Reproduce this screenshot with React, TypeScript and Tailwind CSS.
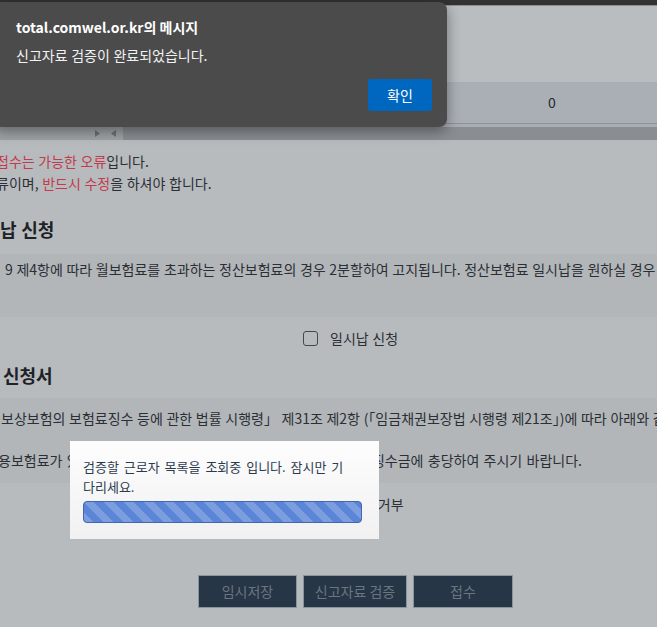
import React from "react";

function Arrow({ dir }: { dir: "left" | "right" }) {
  return (
    <svg width="5" height="7" viewBox="0 0 5 7" className="block">
      {dir === "right" ? (
        <polygon points="0,0 5,3.5 0,7" fill="#6c7075" />
      ) : (
        <polygon points="5,0 0,3.5 5,7" fill="#6c7075" />
      )}
    </svg>
  );
}

export default function App() {
  return (
    <div className="relative w-[657px] h-[627px] overflow-hidden bg-[#b7bbbe] font-['Noto_Sans_CJK_KR','Noto_Sans',sans-serif] text-[14px] [word-spacing:0.5px] text-[#2b2f35]">
      {/* top strip */}
      <div className="h-[5px] bg-[#323232]" />
      <div className="h-[1px] bg-[#8d9093]" />
      {/* table header */}
      <div className="h-[76px] bg-[#b9bdc0]" />
      {/* data row */}
      <div className="flex h-[41px] bg-[#aaafb6]">
        <div className="ml-auto flex w-[210px] items-center justify-center text-[#262b31]">0</div>
      </div>
      <div className="h-[1px] bg-[#8e9296]" />
      <div className="h-[3px] bg-[#a9adb2]" />
      {/* horizontal scrollbar */}
      <div className="flex h-[13px]">
        <div className="flex w-[123px] items-center bg-[#9ea2a6] pl-[95px] gap-[11px]">
          <Arrow dir="right" />
          <Arrow dir="left" />
        </div>
        <div className="flex-1 bg-[#8a8e93]" />
      </div>

      {/* notes */}
      <div className="mt-[10px] leading-[22px] whitespace-nowrap">
        <p className="-ml-[4px]">
          <span className="text-[#c23a4c]">접수는 가능한 오류</span>입니다.
        </p>
        <p className="-ml-[4px]">
          류이며, <span className="text-[#c23a4c]">반드시 수정</span>을 하셔야 합니다.
        </p>
      </div>

      {/* heading 1 */}
      <h2 className="mt-[22px] text-[18px] font-bold leading-[26px] text-[#1e2226]">납 신청</h2>

      {/* band 1 */}
      <div className="mt-[12px] h-[63px] bg-[#b2b6b9] pt-[4px] pl-[5px] leading-[22px] whitespace-nowrap">
        9 제4항에 따라 월보험료를 초과하는 정산보험료의 경우 2분할하여 고지됩니다. 정산보험료 일시납을 원하실 경우
      </div>

      {/* checkbox */}
      <div className="mt-[10px] flex items-center gap-[12px] pl-[303px] leading-[22px]">
        <span className="block h-[15px] w-[15px] rounded-[3px] border border-[#42484e]" />
        <span>일시납 신청</span>
      </div>

      {/* heading 2 */}
      <h2 className="mt-[13px] pl-[3px] text-[18px] font-bold leading-[26px] text-[#1e2226]">신청서</h2>

      {/* band 2 */}
      <div className="mt-[10px] h-[85px] bg-[#b2b6b9] pt-[9px] leading-[22px] whitespace-nowrap">
        <p className="pl-[1px]">
          보상보험의 보험료징수 등에 관한 법률 시행령」 제31조 제2항 (「임금채권보장법 시행령 제21조」)에 따라 아래와 같이 신청합니다.
        </p>
        <p className="mt-[20px] -ml-[2px] [word-spacing:1.2px]">
          용보험료가 있는 경우에는 환급금을 지급하지 않고 그 보험료 및 징수금에 충당하여 주시기 바랍니다.
        </p>
      </div>

      {/* agree row */}
      <div className="mt-[10px] flex items-center pl-[302px] leading-[22px]">
        <span className="block h-[13px] w-[13px] rounded-full border border-[#42484e]" />
        <span className="ml-[4px]">동의</span>
        <span className="ml-[16px] block h-[13px] w-[13px] rounded-full border border-[#42484e]" />
        <span className="ml-[4px]">거부</span>
      </div>

      {/* buttons */}
      <div className="mt-[60px] flex gap-[6px] pl-[198px]">
        <button className="h-[33px] w-[99px] border border-[#8b939b] bg-[#263646] text-[14px] text-[#6b7581]">임시저장</button>
        <button className="h-[33px] w-[104px] border border-[#8b939b] bg-[#263646] text-[14px] text-[#6b7581]">신고자료 검증</button>
        <button className="h-[33px] w-[100px] border border-[#8b939b] bg-[#263646] text-[14px] text-[#6b7581]">접수</button>
      </div>

      {/* loading modal */}
      <div className="absolute left-[70px] top-[441px] h-[98px] w-[309px] bg-gradient-to-b from-[#fdfdfd] to-[#f1f1f1] pl-[13px] pt-[16px]">
        <p className="text-[13px] leading-[20px] text-[#2c3a50] [word-spacing:2px]">
          검증할 근로자 목록을 조회중 입니다. 잠시만 기<br />다리세요.
        </p>
        <div className="mt-[4px] h-[22px] w-[279px] rounded-[4px] border border-[#4266b0] bg-[#5b85d6] bg-[linear-gradient(45deg,rgba(255,255,255,.2)_25%,transparent_25%,transparent_50%,rgba(255,255,255,.2)_50%,rgba(255,255,255,.2)_75%,transparent_75%,transparent)] bg-[length:20px_20px]" />
      </div>

      {/* alert dialog */}
      <div className="absolute left-[-8px] top-[2px] flex h-[125px] w-[455px] flex-col rounded-[8px] bg-[#4b4b4b] pl-[24px] pr-[15px] pt-[15px] shadow-[0_4px_14px_rgba(0,0,0,0.4)]">
        <p className="text-[14px] font-bold leading-[20px] text-white [word-spacing:0px]">total.comwel.or.kr의 메시지</p>
        <p className="mt-[8px] leading-[20px] text-[#f2f2f2]">신고자료 검증이 완료되었습니다.</p>
        <div className="mt-[14px] flex justify-end">
          <button className="h-[32px] w-[64px] rounded-[3px] bg-[#0067c0] text-[14px] text-white">확인</button>
        </div>
      </div>
    </div>
  );
}
